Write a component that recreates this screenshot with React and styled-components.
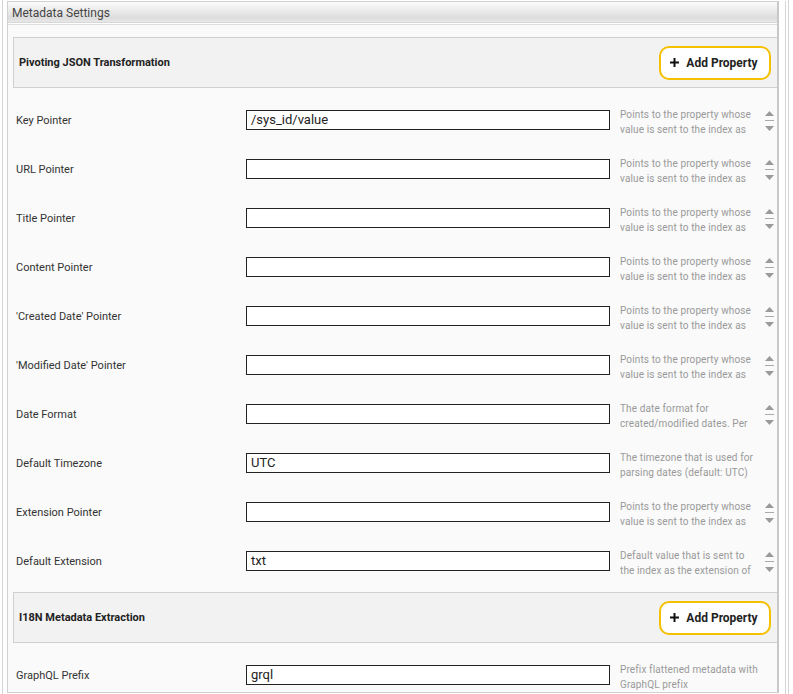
import React from "react";
import styled, { createGlobalStyle } from "styled-components";

const Global = createGlobalStyle`
  html, body { margin: 0; padding: 0; background: #fff; }
  body { font-family: Roboto, "Liberation Sans", sans-serif; color: #333; }
`;

const Outer = styled.div`
  margin-left: 2px;
  width: 787px;
  height: 694px;
  box-sizing: border-box;
  border-left: 1px solid #d4d4d4;
  border-right: 1px solid #d4d4d4;
  padding-top: 1px;
  overflow: hidden;
`;

const Inner = styled.div`
  box-sizing: border-box;
  width: 783px;
  padding-left: 4px;
  padding-right: 6px;
  border-right: 1px solid #d4d4d4;
  height: 693px;
`;

const Panel = styled.div`
  box-sizing: border-box;
  height: 692px;
  border: 1px solid #d0d0d0;
  border-right: 2px solid #c8c8c8;
  overflow: hidden;
  background: #fafafa;
`;

const PanelHeader = styled.div`
  height: 20px;
  line-height: 23px;
  overflow: hidden;
  padding-left: 4px;
  font-size: 12px;
  color: #444;
  background: linear-gradient(#fbfbfb 0%, #e6e6e6 55%, #dcdcdc 80%, #e8e8e8 100%);
  border-bottom: 1px solid #d8d8d8;
  box-shadow: 0 1px 0 #fff, 0 2px 0 #dedede;
`;

const Body = styled.div`
  padding: 14px 0 0 5px;
`;

const SectionHeader = styled.div`
  box-sizing: border-box;
  height: 51px;
  display: flex;
  align-items: center;
  justify-content: space-between;
  padding: 0 6px 0 5px;
  background: #f2f2f2;
  border: 1px solid #d0d0d0;
  border-right: none;
`;

const SectionTitle = styled.div`
  font-size: 11px;
  font-weight: bold;
  color: #222;
`;

const AddButton = styled.button`
  box-sizing: border-box;
  width: 112px;
  height: 34px;
  display: flex;
  align-items: center;
  justify-content: center;
  gap: 7px;
  background: #fff;
  border: 2px solid #f5c000;
  border-radius: 10px;
  font-family: Roboto, "Liberation Sans", sans-serif;
  font-size: 12px;
  font-weight: bold;
  color: #222;
  padding: 0 2px 0 0;
  cursor: pointer;
`;

const Rows = styled.div`
  padding: 7px 0;
`;

const Row = styled.div`
  height: 49px;
  display: grid;
  grid-template-columns: 230px 364px 152px 14px;
  align-items: center;
  padding-left: 3px;
`;

const Label = styled.div`
  font-size: 11px;
  color: #333;
  margin-top: 1px;
`;

const Input = styled.div`
  box-sizing: border-box;
  height: 20px;
  border: 1px solid #222;
  background: #fff;
  font-size: 13px;
  line-height: 18px;
  padding-left: 4px;
  color: #222;
  margin-top: 1px;
`;

const Desc = styled.div`
  margin-left: 10px;
  margin-top: 4px;
  font-size: 10px;
  letter-spacing: 0.12px;
  line-height: 15px;
  color: #999;
  height: 30px;
  overflow: hidden;
  white-space: nowrap;
`;

const SpinWrap = styled.div`
  margin-top: 2px;
  display: flex;
  justify-content: center;
`;

const Spinner = () => (
  <svg width="11" height="22" viewBox="0 0 11 22">
    <path d="M1 6 L5.5 1 L10 6 Z" fill="#9a9a9a" />
    <rect x="1" y="10" width="9" height="1" fill="#aaa" />
    <path d="M1 16 L10 16 L5.5 21 Z" fill="#9a9a9a" />
  </svg>
);

const Plus = () => (
  <svg width="9" height="9" viewBox="0 0 9 9">
    <rect x="3.5" y="0" width="2" height="9" fill="#111" />
    <rect x="0" y="3.5" width="9" height="2" fill="#111" />
  </svg>
);

const pointerDesc = ["Points to the property whose", "value is sent to the index as"];

const rows1 = [
  { label: "Key Pointer", value: "/sys_id/value", desc: pointerDesc, spin: true },
  { label: "URL Pointer", value: "", desc: pointerDesc, spin: true },
  { label: "Title Pointer", value: "", desc: pointerDesc, spin: true },
  { label: "Content Pointer", value: "", desc: pointerDesc, spin: true },
  { label: "'Created Date' Pointer", value: "", desc: pointerDesc, spin: true },
  { label: "'Modified Date' Pointer", value: "", desc: pointerDesc, spin: true },
  { label: "Date Format", value: "", desc: ["The date format for", "created/modified dates. Per"], spin: true },
  { label: "Default Timezone", value: "UTC", desc: ["The timezone that is used for", "parsing dates (default: UTC)"], spin: false },
  { label: "Extension Pointer", value: "", desc: pointerDesc, spin: true },
  { label: "Default Extension", value: "txt", desc: ["Default value that is sent to", "the index as the extension of"], spin: true },
];

const rows2 = [
  { label: "GraphQL Prefix", value: "grql", desc: ["Prefix flattened metadata with", "GraphQL prefix"], spin: false },
];

const FieldRow = ({ label, value, desc, spin }) => (
  <Row>
    <Label>{label}</Label>
    <Input>{value}</Input>
    <Desc>
      {desc[0]}
      <br />
      {desc[1]}
    </Desc>
    <SpinWrap>{spin ? <Spinner /> : null}</SpinWrap>
  </Row>
);

const Section = ({ title, rows }) => (
  <>
    <SectionHeader>
      <SectionTitle>{title}</SectionTitle>
      <AddButton>
        <Plus />
        Add Property
      </AddButton>
    </SectionHeader>
    <Rows>
      {rows.map((r) => (
        <FieldRow key={r.label} {...r} />
      ))}
    </Rows>
  </>
);

export default function App() {
  return (
    <>
      <Global />
      <Outer>
        <Inner>
          <Panel>
            <PanelHeader>Metadata Settings</PanelHeader>
            <Body>
              <Section title="Pivoting JSON Transformation" rows={rows1} />
              <Section title="I18N Metadata Extraction" rows={rows2} />
            </Body>
          </Panel>
        </Inner>
      </Outer>
    </>
  );
}
